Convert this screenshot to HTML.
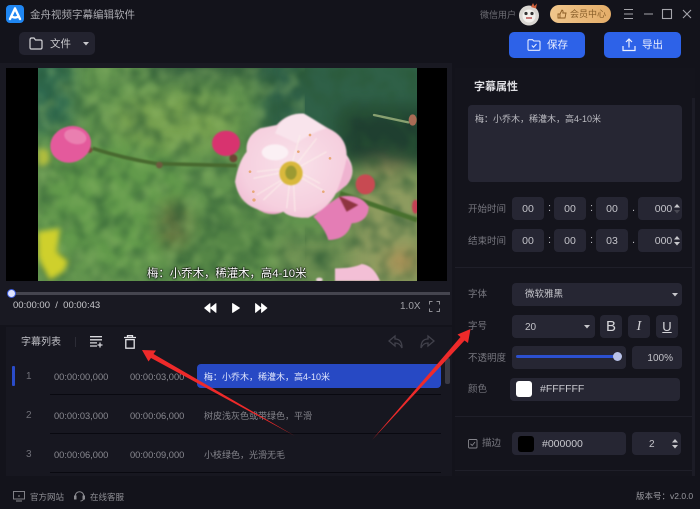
<!DOCTYPE html>
<html lang="zh"><head><meta charset="utf-8"><style>
*{box-sizing:border-box;margin:0;padding:0}
html,body{width:700px;height:509px;overflow:hidden;background:#13131b}
body{position:relative;font-family:"Liberation Sans","Noto Sans CJK SC",sans-serif;color:#c8c8ce}
.a{position:absolute;white-space:nowrap}
.b{position:absolute;background:#262633;border-radius:4px}
.t{font-size:10px;line-height:14px}
.l{position:absolute;font-size:9.5px;line-height:14px;color:#77777f;white-space:nowrap}
.c{position:absolute;text-align:center;font-size:10.5px;color:#c4c4ca;line-height:25px;background:#262633;border-radius:4px;height:23px;overflow:hidden}
.g{color:#85858c;font-size:9px;line-height:14px}
svg{position:absolute;overflow:visible}
</style></head><body>
<div class="a" style="left:0;top:63px;width:452px;height:262px;background:#191922"></div>
<div class="a" style="left:6px;top:327px;width:446px;height:149px;background:#171720"></div>
<div class="a" style="left:455px;top:68px;width:240px;height:408px;background:#14141c"></div>
<div class="a" style="left:692px;top:98px;width:3px;height:378px;background:#1c1c26"></div>

<svg style="left:6px;top:5px" width="18" height="18" viewBox="0 0 18 18"><rect width="18" height="18" rx="4" fill="#1f86f2"/><path d="M9 3.5 L14 14 M9 3.5 L4 14 M5.5 11.5 C8 13 10 13 12.5 11.5" stroke="#fff" stroke-width="2.4" fill="none" stroke-linecap="round"/></svg>
<div class="a" style="left:30px;top:8px;font-size:10.5px;line-height:15px;color:#a9a9af">金舟视频字幕编辑软件</div>

<div class="b" style="left:19px;top:32px;width:76px;height:23px;background:#23232f;border-radius:5px"></div>
<svg style="left:29px;top:37px" width="14" height="13" viewBox="0 0 14 13"><path d="M1 3 Q1 1 2.5 1 H5 L6.5 3 H11.5 Q13 3 13 4.5 V10.5 Q13 12 11.5 12 H2.5 Q1 12 1 10.5 Z" fill="none" stroke="#d4d4d8" stroke-width="1.2"/></svg>
<div class="a" style="left:50px;top:37px;font-size:10.5px;line-height:15px;color:#c8c8cc">文件</div>
<svg style="left:83px;top:42px" width="7" height="4"><path d="M0 0H6L3 3.5Z" fill="#c8c8cc"/></svg>

<div class="a" style="left:480px;top:8px;font-size:9px;line-height:14px;color:#6d6d74">微信用户</div>
<svg style="left:518px;top:2px" width="24" height="24" viewBox="0 0 24 24"><circle cx="11" cy="13.5" r="10" fill="#d9d6d2"/><circle cx="11" cy="14" r="6.5" fill="#f3f1ee"/><circle cx="8" cy="11.5" r="1.6" fill="#333"/><circle cx="14" cy="11.5" r="1.6" fill="#333"/><path d="M8 16h6" stroke="#b55" stroke-width="1.5"/><path d="M13 5 L15 1 L16.5 4 L19 1.5 L18 6.5Z" fill="#d0603a"/></svg>
<div class="a" style="left:550px;top:5px;width:61px;height:18px;border-radius:9px;background:linear-gradient(90deg,#f0c68c,#e4ad69)"></div>
<svg style="left:557px;top:9px" width="10" height="10" viewBox="0 0 10 10"><path d="M1 5H3V9H1ZM3 5 L5 1 Q6.2 1.3 6 3 L5.8 4H9 L8 9H3" fill="none" stroke="#8a5a22" stroke-width=".9"/></svg>
<div class="a" style="left:570px;top:7px;font-size:9px;line-height:14px;color:#875d28">会员中心</div>
<svg style="left:624px;top:9px" width="70" height="12" viewBox="0 0 70 12" fill="none" stroke="#a5a5ab" stroke-width="1.1"><path d="M0 .5H9M0 5H9M0 9.5H9M20 5H29"/><rect x="38.5" y=".5" width="9" height="9"/><path d="M59 1 L67 9 M67 1 L59 9"/></svg>

<div class="a" style="left:509px;top:32px;width:76px;height:26px;background:#2d62e8;border-radius:5px"></div>
<svg style="left:527px;top:39px" width="14" height="12" viewBox="0 0 14 12" fill="none" stroke="#e6ecff" stroke-width="1.1"><path d="M1 2 Q1 .7 2 .7H5.5L6.8 2H12Q13 2 13 3V10Q13 11.3 12 11.3H2Q1 11.3 1 10Z"/><path d="M4.8 6.5 L6.5 8.2 L9.5 5"/></svg>
<div class="a" style="left:547px;top:38px;font-size:10.5px;line-height:15px;color:#e9eeff">保存</div>
<div class="a" style="left:604px;top:32px;width:77px;height:26px;background:#2d62e8;border-radius:5px"></div>
<svg style="left:622px;top:38px" width="14" height="14" viewBox="0 0 14 14" fill="none" stroke="#edf1ff" stroke-width="1.2"><path d="M7 9.5V1.2M4 4 L7 1 L10 4M1 8V12.5H13V8"/></svg>
<div class="a" style="left:642px;top:38px;font-size:10.5px;line-height:15px;color:#e9eeff">导出</div>

<!-- video -->
<div class="a" style="left:6px;top:68px;width:441px;height:213px;background:#000"></div>
<svg style="left:38px;top:68px" width="379" height="213" viewBox="114 9 1137 639">
<defs><clipPath id="cp"><rect x="114" y="9" width="1137" height="639"/></clipPath>
<filter id="f1" x="-30%" y="-30%" width="160%" height="160%" color-interpolation-filters="sRGB"><feGaussianBlur stdDeviation="28"/></filter>
<filter id="f3" x="-10%" y="-10%" width="120%" height="120%" color-interpolation-filters="sRGB"><feGaussianBlur stdDeviation="2"/></filter>
<filter id="f4" x="-20%" y="-20%" width="140%" height="140%" color-interpolation-filters="sRGB"><feGaussianBlur stdDeviation="8"/></filter>
<filter id="nz" x="0" y="0" width="100%" height="100%" color-interpolation-filters="sRGB"><feTurbulence type="fractalNoise" baseFrequency="0.018" numOctaves="2" seed="7"/><feColorMatrix values="0 0 0 0 0.16  0 0 0 0 0.34  0 0 0 0 0.2  2 0 0 0 -0.8"/><feGaussianBlur stdDeviation="5"/></filter>
<filter id="nl" x="0" y="0" width="100%" height="100%" color-interpolation-filters="sRGB"><feTurbulence type="fractalNoise" baseFrequency="0.02" numOctaves="2" seed="21"/><feColorMatrix values="0 0 0 0 0.58  0 0 0 0 0.74  0 0 0 0 0.42  2 0 0 0 -0.85"/><feGaussianBlur stdDeviation="5"/></filter>
<radialGradient id="pt" cx="50%" cy="48%" r="58%"><stop offset="0" stop-color="#f9e2ea"/><stop offset=".75" stop-color="#f6d0df"/><stop offset="1" stop-color="#f2c0d6"/></radialGradient>
</defs>
<g clip-path="url(#cp)">
<rect x="114" y="9" width="1137" height="639" fill="#62944e"/>
<g filter="url(#f1)">
<rect x="780" y="-50" width="540" height="330" fill="#2f6047"/>
<rect x="1020" y="130" width="280" height="170" fill="#1f3f30"/>
<rect x="50" y="-50" width="170" height="250" fill="#2f6a50"/>
<rect x="450" y="-50" width="330" height="90" fill="#355f3f"/>
<ellipse cx="520" cy="170" rx="190" ry="90" fill="#76a04f"/>
<ellipse cx="350" cy="420" rx="220" ry="190" fill="#629a4b"/>
<ellipse cx="660" cy="540" rx="170" ry="110" fill="#558646"/>
<ellipse cx="520" cy="480" rx="45" ry="70" fill="#66703f"/>
<rect x="1050" y="330" width="240" height="350" fill="#8d9b5f"/>
<rect x="830" y="510" width="220" height="170" fill="#6d8f52"/>
<ellipse cx="1210" cy="590" rx="50" ry="28" fill="#b98c52"/>
<ellipse cx="1160" cy="305" rx="70" ry="22" fill="#8b8655"/>
</g>
<rect x="114" y="9" width="1137" height="639" filter="url(#nz)" opacity=".7"/>
<rect x="114" y="9" width="800" height="639" filter="url(#nl)" opacity=".45"/>
<g filter="url(#f4)">
<path d="M114 500 L180 490 L170 560 L205 590 L190 620 L150 645 L125 600 L114 570Z" fill="#cfd02c"/>
<path d="M114 250 L145 255 L150 290 L125 305 L114 295Z" fill="#b0bd3e"/>
</g>
<path d="M1122 150 L1225 172" stroke="#88a070" stroke-width="7" stroke-linecap="round"/>
<ellipse cx="1238" cy="165" rx="12" ry="17" fill="#a96b55"/>
<g filter="url(#f3)">
<path d="M278 250 Q370 280 470 296 L710 302" stroke="#48692f" stroke-width="11" fill="none"/>
<circle cx="478" cy="300" r="10" fill="#6d5a3e"/>
<circle cx="268" cy="255" r="9" fill="#7a4a3a"/>
<circle cx="700" cy="280" r="12" fill="#6d4434"/>
<path d="M1020 385 L1251 465" stroke="#48702e" stroke-width="14"/>
<ellipse cx="212" cy="238" rx="62" ry="54" transform="rotate(-20 212 238)" fill="#e45a9c"/>
<ellipse cx="226" cy="215" rx="34" ry="22" transform="rotate(15 226 215)" fill="#ea7fb0"/>
<ellipse cx="678" cy="235" rx="42" ry="38" fill="#d8336f"/>
<ellipse cx="1096" cy="358" rx="29" ry="30" fill="#c84a52"/>
<ellipse cx="1246" cy="425" rx="10" ry="21" fill="#c43f55"/>
<path d="M940 455 Q990 410 1020 395 Q1080 385 1106 425 Q1105 470 1055 475 Q1040 525 985 525 Q975 490 940 455Z" fill="#e47db5"/>
<path d="M1015 392 L1075 420 L1040 440Z" fill="#8e3440"/>
<path d="M765 428 Q810 460 850 440 L830 420Z" fill="#eba9c7"/>
<path d="M705 350 Q715 290 740 260 Q735 215 780 190 L830 180 Q860 145 910 145 Q960 175 985 190 Q1040 215 1040 270 Q1075 320 1040 360 L1008 385 Q985 430 925 458 Q870 460 850 440 Q800 445 765 430 Q715 410 705 350Z" fill="url(#pt)"/>
<path d="M1040 280 Q1070 320 1040 360 L1008 385 Q1030 330 1040 280Z" fill="#efb3d0"/>
<path d="M835 182 Q860 145 910 145 Q955 170 978 190 Q930 205 890 235 Q850 215 825 205Z" fill="#f9e4ec"/>
<ellipse cx="825" cy="262" rx="40" ry="24" fill="#fbf0f4"/>
</g>
<g filter="url(#f3)" stroke="#fdf3ec" stroke-width="3" fill="none" opacity=".85">
<path d="M870 330 L770 390 M870 330 L790 405 M880 340 L885 440 M870 340 L860 430 M890 330 L975 380 M895 320 L960 355 M880 310 L950 220 M875 300 L900 210 M860 310 L770 320 M860 320 L760 340 M890 310 L980 260"/>
</g>
<ellipse cx="873" cy="325" rx="35" ry="36" fill="#d9b83c" filter="url(#f3)"/>
<ellipse cx="873" cy="323" rx="17" ry="21" fill="#9c9a32" filter="url(#f3)"/>
<g fill="#e8a878"><circle cx="930" cy="210" r="4"/><circle cx="990" cy="280" r="4"/><circle cx="760" cy="380" r="4"/><circle cx="762" cy="405" r="5"/><circle cx="970" cy="380" r="4"/><circle cx="895" cy="260" r="4"/><circle cx="750" cy="320" r="4"/></g>
<g filter="url(#f3)"><path d="M1005 610 Q1060 610 1085 597 Q1120 600 1140 648 H1005Z" fill="#f3bfd6"/><ellipse cx="958" cy="644" rx="10" ry="6" fill="#eed2dc"/></g>
</g></svg>
<div class="a" style="left:147px;top:267px;font-size:11.4px;line-height:15px;color:#fff;text-shadow:0 0 1.5px #000,0 0 1.5px #000,0 0 2px #000">梅：小乔木，稀灌木，高4-10米</div>

<div class="a" style="left:11px;top:292px;width:439px;height:3px;background:#45454f"></div>
<div class="a" style="left:7px;top:289px;width:9px;height:9px;border-radius:50%;background:#dfe4ff;border:1.5px solid #3f5fe0"></div>
<div class="a" style="left:13px;top:299px;font-size:9.5px;line-height:14px;color:#c8c8cc">00:00:00&nbsp; /&nbsp; 00:00:43</div>
<svg style="left:204px;top:303px" width="64" height="10" viewBox="0 0 64 10" fill="#fff" stroke="#fff" stroke-width=".8" stroke-linejoin="round"><path d="M6 .5V9.5L.5 5ZM12 .5V9.5L6.5 5Z"/><path d="M28.5 .5V9.5L35.5 5Z"/><path d="M51.5 .5V9.5L57 5ZM57.5 .5V9.5L63 5Z"/></svg>
<div class="a" style="left:400px;top:300px;font-size:10px;line-height:14px;color:#a0a0a6">1.0X</div>
<svg style="left:429px;top:301px" width="11" height="11" viewBox="0 0 11 11" fill="none" stroke="#8c8c92" stroke-width="1"><path d="M.5 3.5V.5H3.5M7.5.5H10.5V3.5M10.5 7.5V10.5H7.5M3.5 10.5H.5V7.5"/></svg>

<div class="a" style="left:21px;top:335px;font-size:10px;line-height:15px;color:#c0c0c6">字幕列表</div>
<div class="a" style="left:75px;top:337px;width:1px;height:10px;background:#2c2c36"></div>
<svg style="left:90px;top:336px" width="13" height="12" viewBox="0 0 13 12" stroke="#d8d8dc" stroke-width="1.3" fill="none"><path d="M0 .7H12M0 3.8H12M0 6.9H7M0 10H7M10 6.5V11.5M7.5 9H12.5"/></svg>
<svg style="left:124px;top:335px" width="12" height="14" viewBox="0 0 12 14" stroke="#e4e4e8" stroke-width="1.3" fill="none"><path d="M0 2.5H12M3.5 2.5V.7H8.5V2.5"/><rect x="1.8" y="4.6" width="8.4" height="8.6"/></svg>
<svg style="left:388px;top:335px" width="50" height="14" viewBox="0 0 50 14" stroke="#41414b" stroke-width="1.3" fill="none"><path d="M7 1 L1 6 L7 11 V8 Q12 8 14 13 Q14 4 7 4Z"/><path d="M35 1 L41 6 L35 11 V8 Q30 8 28 13 Q28 4 35 4Z" transform="translate(5 0)"/></svg>

<div class="a" style="left:12px;top:366px;width:3px;height:20px;background:#2a4cc9;border-radius:1px"></div>
<div class="a" style="left:197px;top:364px;width:244px;height:24px;background:#2749c4;border-radius:4px"></div>
<div class="a" style="left:445px;top:358px;width:5px;height:26px;background:#3a3a44;border-radius:2px"></div>
<div class="a" style="left:50px;top:394px;width:391px;height:1px;background:#090910"></div>
<div class="a" style="left:50px;top:433px;width:391px;height:1px;background:#090910"></div>
<div class="a" style="left:50px;top:472px;width:391px;height:1px;background:#090910"></div>
<div class="a t" style="left:26px;top:370px;color:#6f6f77">1</div>
<div class="a t" style="left:54px;top:370px;font-size:9.3px;color:#8a8a91">00:00:00,000</div>
<div class="a t" style="left:130px;top:370px;font-size:9.3px;color:#8a8a91">00:00:03,000</div>
<div class="a t" style="left:204px;top:370px;font-size:9px;color:#dfe5fb">梅：小乔木，稀灌木，高4-10米</div>
<div class="a t" style="left:26px;top:409px;color:#6f6f77">2</div>
<div class="a t" style="left:54px;top:409px;font-size:9.3px;color:#8a8a91">00:00:03,000</div>
<div class="a t" style="left:130px;top:409px;font-size:9.3px;color:#8a8a91">00:00:06,000</div>
<div class="a t" style="left:204px;top:409px;font-size:9px;color:#85858c">树皮浅灰色或带绿色，平滑</div>
<div class="a t" style="left:26px;top:448px;color:#6f6f77">3</div>
<div class="a t" style="left:54px;top:448px;font-size:9.3px;color:#8a8a91">00:00:06,000</div>
<div class="a t" style="left:130px;top:448px;font-size:9.3px;color:#8a8a91">00:00:09,000</div>
<div class="a t" style="left:204px;top:448px;font-size:9px;color:#85858c">小枝绿色，光滑无毛</div>

<svg style="left:13px;top:491px" width="12" height="11" viewBox="0 0 12 11" fill="none" stroke="#8c8c92" stroke-width=".9"><rect x=".5" y=".5" width="11" height="7.5"/><path d="M3 10H9M5 5H7"/></svg>
<div class="a g" style="left:30px;top:490px;font-size:8.5px;color:#8e8e94">官方网站</div>
<svg style="left:74px;top:491px" width="11" height="11" viewBox="0 0 11 11" fill="none" stroke="#8c8c92" stroke-width="1"><path d="M1.2 7V5A4.3 4.3 0 0 1 9.8 5V7M9.8 7Q9.5 9.8 6.5 10"/><rect x=".5" y="5" width="1.5" height="3" fill="#8c8c92"/><rect x="9" y="5" width="1.5" height="3" fill="#8c8c92"/></svg>
<div class="a g" style="left:90px;top:490px;font-size:8.5px;color:#8e8e94">在线客服</div>
<div class="a g" style="left:636px;top:489px;font-size:8.5px;color:#9a9aa0">版本号：v2.0.0</div>

<!-- right -->
<div class="a" style="left:474px;top:79px;font-size:11px;line-height:16px;font-weight:bold;color:#dedee2">字幕属性</div>
<div class="b" style="left:468px;top:105px;width:214px;height:77px"></div>
<div class="a" style="left:475px;top:112px;font-size:9px;line-height:14px;color:#bcbcc2">梅：小乔木，稀灌木，高4-10米</div>
<div class="l" style="left:468px;top:203px">开始时间</div>
<div class="l" style="left:468px;top:235px">结束时间</div>
<div class="c" style="left:512px;top:197px;width:32px">00</div><div class="a" style="left:548px;top:201px;font-size:11px;line-height:15px;color:#b8b8be">:</div>
<div class="c" style="left:554px;top:197px;width:32px">00</div><div class="a" style="left:590px;top:201px;font-size:11px;line-height:15px;color:#b8b8be">:</div>
<div class="c" style="left:596px;top:197px;width:32px">00</div><div class="a" style="left:632px;top:201px;font-size:11px;line-height:15px;color:#b8b8be">.</div>
<div class="c" style="left:638px;top:197px;width:44px;padding-left:7px">000</div>
<svg style="left:674px;top:204px" width="7" height="10"><path d="M0 3.5L3 0L6 3.5Z" fill="#c8c8cc"/><path d="M0 6L3 9.5L6 6Z" fill="#4a4a54"/></svg>
<div class="c" style="left:512px;top:229px;width:32px">00</div><div class="a" style="left:548px;top:233px;font-size:11px;line-height:15px;color:#b8b8be">:</div>
<div class="c" style="left:554px;top:229px;width:32px">00</div><div class="a" style="left:590px;top:233px;font-size:11px;line-height:15px;color:#b8b8be">:</div>
<div class="c" style="left:596px;top:229px;width:32px">03</div><div class="a" style="left:632px;top:233px;font-size:11px;line-height:15px;color:#b8b8be">.</div>
<div class="c" style="left:638px;top:229px;width:44px;padding-left:7px">000</div>
<svg style="left:674px;top:236px" width="7" height="10"><path d="M0 3.5L3 0L6 3.5Z" fill="#c8c8cc"/><path d="M0 6L3 9.5L6 6Z" fill="#c8c8cc"/></svg>
<div class="a" style="left:455px;top:267px;width:237px;height:1px;background:#1f1f29"></div>

<div class="l" style="left:468px;top:288px">字体</div>
<div class="c" style="left:512px;top:283px;width:170px;text-align:left;padding-left:13px;font-size:9.5px;line-height:23px">微软雅黑</div>
<svg style="left:672px;top:293px" width="7" height="4"><path d="M0 0H6L3 3.5Z" fill="#c8c8cc"/></svg>
<div class="l" style="left:468px;top:320px">字号</div>
<div class="c" style="left:512px;top:315px;width:83px;text-align:left;padding-left:13px;font-size:10px">20</div>
<svg style="left:584px;top:325px" width="7" height="4"><path d="M0 0H6L3 3.5Z" fill="#c8c8cc"/></svg>
<div class="c" style="left:600px;top:315px;width:22px;font-size:15px;color:#d6d6da;line-height:23px">B</div>
<div class="c" style="left:628px;top:315px;width:22px;font-size:14px;color:#d6d6da;font-family:'Liberation Serif',serif;font-style:italic;line-height:23px">I</div>
<div class="c" style="left:656px;top:315px;width:22px;font-size:13px;color:#d6d6da;text-decoration:underline;line-height:23px">U</div>
<div class="l" style="left:468px;top:352px">不透明度</div>
<div class="b" style="left:512px;top:346px;width:114px;height:23px"></div>
<div class="a" style="left:516px;top:355px;width:100px;height:3px;background:#2c50cf;border-radius:2px"></div>
<div class="a" style="left:613px;top:352px;width:9px;height:9px;border-radius:50%;background:#b9c2e8"></div>
<div class="c" style="left:632px;top:346px;width:50px;text-align:right;padding-right:9px;font-size:10px">100%</div>
<div class="l" style="left:468px;top:383px">颜色</div>
<div class="b" style="left:510px;top:378px;width:170px;height:23px"></div>
<div class="a" style="left:516px;top:381px;width:16px;height:16px;border-radius:3px;background:#fff"></div>
<div class="a" style="left:540px;top:382px;font-size:10.5px;line-height:15px;color:#c8c8ce">#FFFFFF</div>
<div class="a" style="left:455px;top:416px;width:237px;height:1px;background:#1f1f29"></div>
<svg style="left:468px;top:439px" width="10" height="10" fill="none" stroke="#85858c" stroke-width=".9"><rect x=".5" y=".5" width="8.5" height="8.5" rx="1"/><path d="M2.5 4.8 L4.2 6.5 L7 3"/></svg>
<div class="l" style="left:482px;top:437px">描边</div>
<div class="b" style="left:512px;top:432px;width:114px;height:23px"></div>
<div class="a" style="left:518px;top:436px;width:16px;height:16px;border-radius:3px;background:#000"></div>
<div class="a" style="left:542px;top:437px;font-size:10.5px;line-height:15px;color:#c8c8ce">#000000</div>
<div class="c" style="left:632px;top:432px;width:49px;text-align:left;padding-left:17px;font-size:10px">2</div>
<svg style="left:672px;top:439px" width="7" height="10"><path d="M0 3.5L3 0L6 3.5Z" fill="#c8c8cc"/><path d="M0 6L3 9.5L6 6Z" fill="#c8c8cc"/></svg>
<div class="a" style="left:455px;top:470px;width:237px;height:1px;background:#1f1f29"></div>

<svg style="left:0;top:0" width="700" height="509" viewBox="0 0 700 509">
<path d="M142 350 L156 350.5 L153.5 354 L295 436 L151 358 L148.5 361.5Z" fill="#ee2a2a"/>
<path d="M470.5 329 L468 343 L464.5 340.5 L372 440 L460.5 337 L457.5 334.5Z" fill="#ee2a2a"/>
</svg>
</body></html>
